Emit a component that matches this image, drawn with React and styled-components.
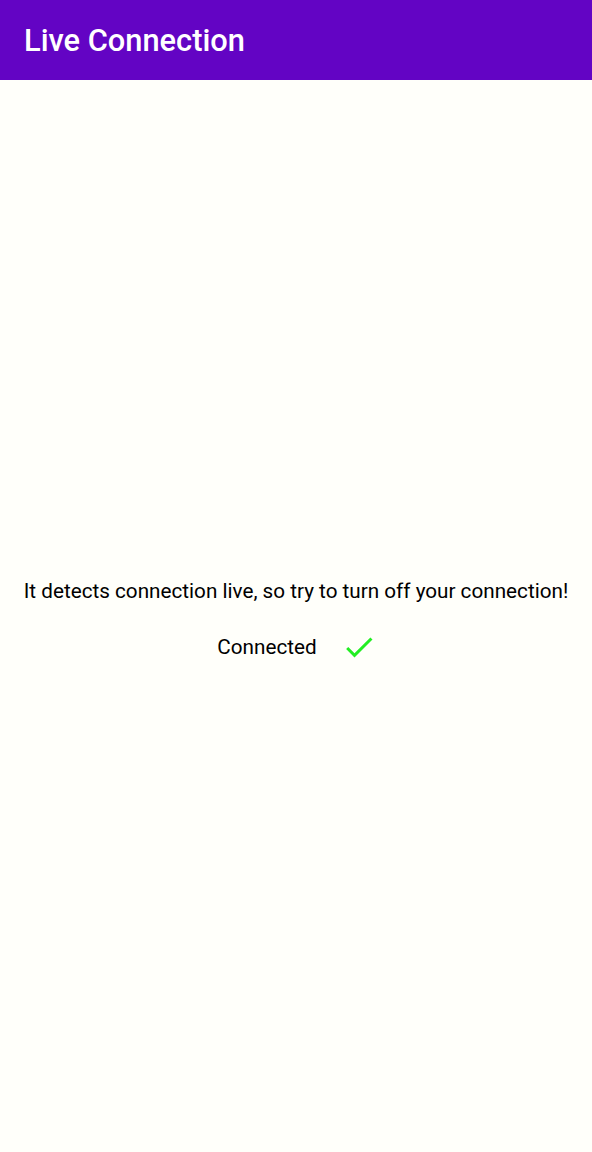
import React from "react";
import styled, { createGlobalStyle } from "styled-components";

const GlobalStyle = createGlobalStyle`
  html, body {
    margin: 0;
    padding: 0;
    background: #fffffa;
  }
  body {
    font-family: Roboto, "Noto Sans", sans-serif;
  }
`;

const Page = styled.div`
  display: flex;
  flex-direction: column;
  min-height: 1152px;
  background: #fffffa;
`;

const AppBar = styled.header`
  height: 80px;
  background: #6304c4;
  display: flex;
  align-items: center;
  padding: 0 24px;
  box-sizing: border-box;
`;

const Title = styled.h1`
  margin: 0;
  color: #ffffff;
  font-size: 30.8px;
  font-weight: 500;
`;

const Content = styled.main`
  flex: 1;
  display: flex;
  flex-direction: column;
  align-items: center;
  justify-content: center;
  padding-top: 12px;
`;

const Message = styled.p`
  margin: 0;
  font-size: 20.7px;
  color: #000;
  text-align: center;
`;

const Status = styled.div`
  display: flex;
  align-items: center;
  gap: 24px;
  margin-top: 26px;
  margin-left: 2px;
`;

const StatusText = styled.span`
  font-size: 20.7px;
  color: #000;
`;

const CheckIcon = () => (
  <svg width="36" height="36" viewBox="0 0 24 24">
    <path
      fill="#22ee22"
      d="M9 16.17L4.83 12l-1.42 1.41L9 19 21 7l-1.41-1.41z"
    />
  </svg>
);

const App = () => {
  return (
    <>
      <GlobalStyle />
      <Page>
        <AppBar>
          <Title>Live Connection</Title>
        </AppBar>
        <Content>
          <Message>
            It detects connection live, so try to turn off your connection!
          </Message>
          <Status>
            <StatusText>Connected</StatusText>
            <CheckIcon />
          </Status>
        </Content>
      </Page>
    </>
  );
};

export default App;
